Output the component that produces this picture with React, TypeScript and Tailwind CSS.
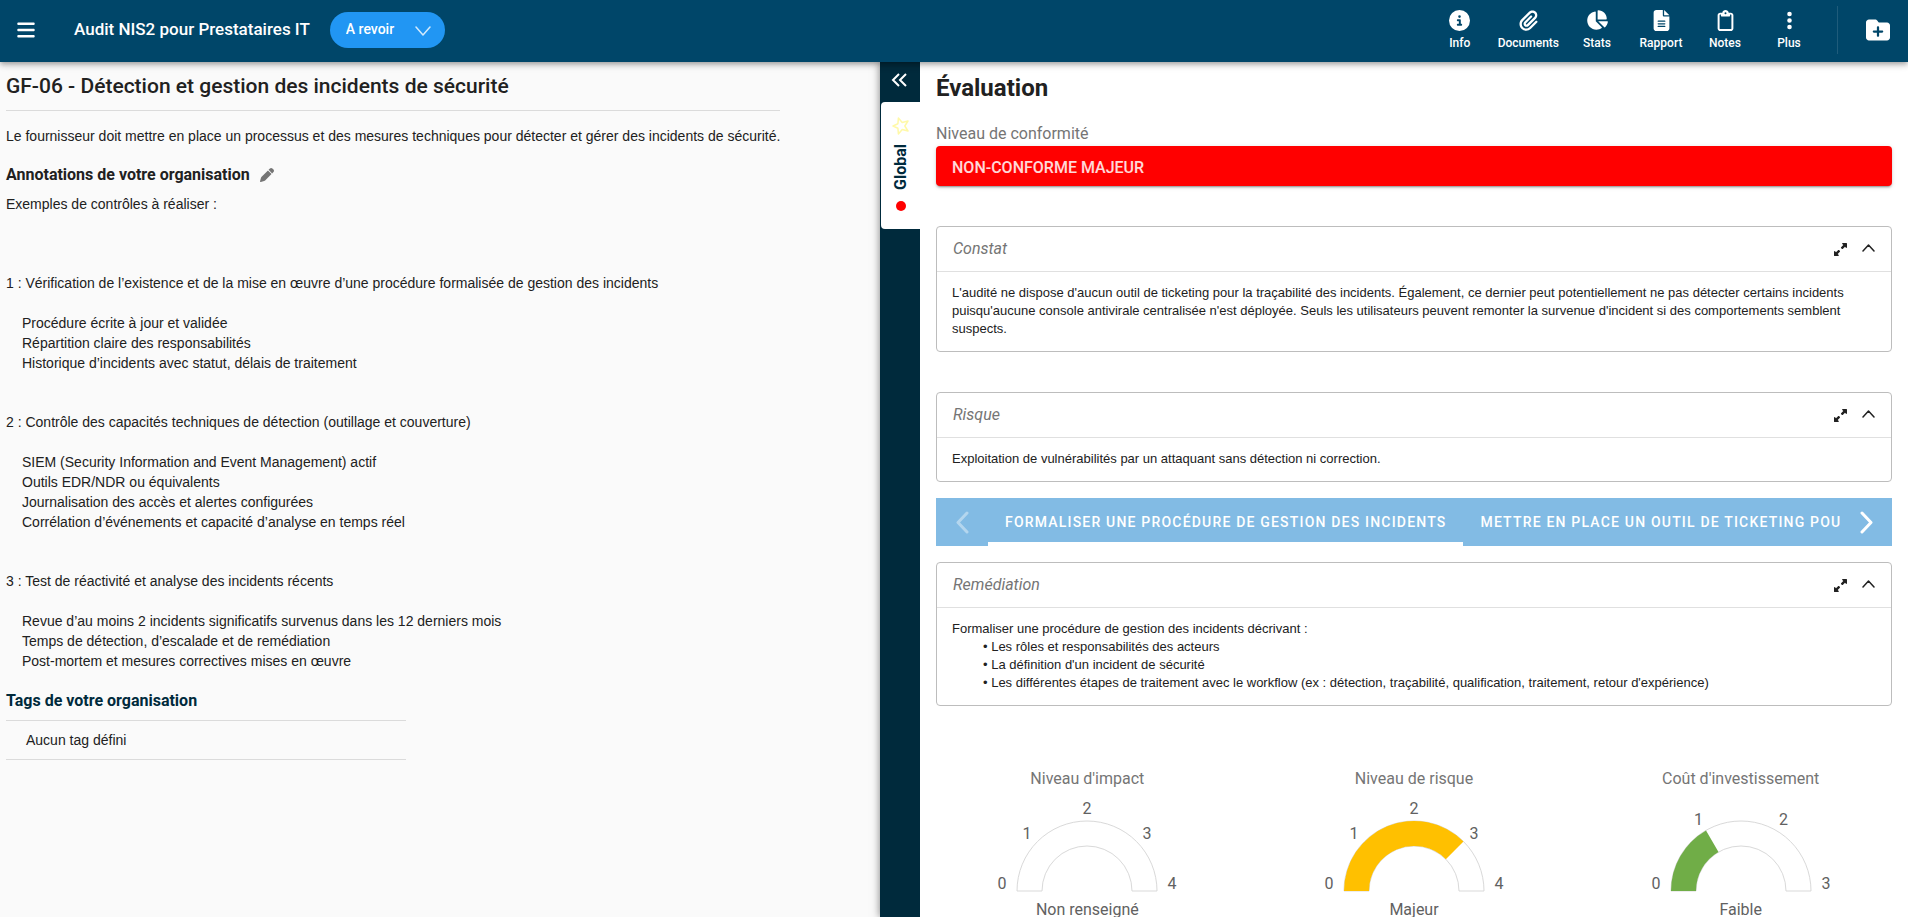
import { ReactNode, useState } from 'react';
import {
  FaBars,
  FaChartPie,
  FaCircleInfo,
  FaEllipsisVertical,
  FaFileLines,
  FaFolderPlus,
  FaPaperclip,
  FaPen,
  FaRegClipboard,
  FaUpRightAndDownLeftFromCenter,
} from 'react-icons/fa6';

const menuItems = [
  { label: 'Info', icon: <FaCircleInfo size={21} /> },
  { label: 'Documents', icon: <FaPaperclip size={21} /> },
  { label: 'Stats', icon: <FaChartPie size={22} /> },
  { label: 'Rapport', icon: <FaFileLines size={21} /> },
  { label: 'Notes', icon: <FaRegClipboard size={21} /> },
  { label: 'Plus', icon: <FaEllipsisVertical size={21} /> },
];

const controls = [
  {
    title:
      '1 : Vérification de l’existence et de la mise en œuvre d’une procédure formalisée de gestion des incidents',
    items: [
      'Procédure écrite à jour et validée',
      'Répartition claire des responsabilités',
      'Historique d’incidents avec statut, délais de traitement',
    ],
  },
  {
    title:
      '2 : Contrôle des capacités techniques de détection (outillage et couverture)',
    items: [
      'SIEM (Security Information and Event Management) actif',
      'Outils EDR/NDR ou équivalents',
      'Journalisation des accès et alertes configurées',
      'Corrélation d’événements et capacité d’analyse en temps réel',
    ],
  },
  {
    title: '3 : Test de réactivité et analyse des incidents récents',
    items: [
      'Revue d’au moins 2 incidents significatifs survenus dans les 12 derniers mois',
      'Temps de détection, d’escalade et de remédiation',
      'Post-mortem et mesures correctives mises en œuvre',
    ],
  },
];

const remediations = [
  'Formaliser une procédure de gestion des incidents',
  'Mettre en place un outil de ticketing pou',
];

interface ChevronProps {
  points: string;
  width: number;
  height: number;
  strokeWidth?: number;
  className?: string;
}

const Chevron = ({
  points,
  width,
  height,
  strokeWidth = 3,
  className,
}: ChevronProps) => (
  <svg
    width={width}
    height={height}
    viewBox={`0 0 ${width} ${height}`}
    fill="none"
    stroke="currentColor"
    strokeWidth={strokeWidth}
    strokeLinecap="round"
    strokeLinejoin="round"
    className={className}
    aria-hidden="true"
  >
    <polyline points={points} />
  </svg>
);

const Header = () => (
  <header className="relative z-10 flex h-[62px] shrink-0 items-center bg-[#004669] pb-0.5 text-white shadow-[0_2px_4px_-1px_rgba(0,0,0,0.2),0_4px_5px_0_rgba(0,0,0,0.14),0_1px_10px_0_rgba(0,0,0,0.12)]">
    <button type="button" aria-label="Menu" className="flex w-13 justify-center">
      <FaBars size={20} />
    </button>
    <h1 className="ml-[22px] text-[17px] font-medium whitespace-nowrap">
      Audit NIS2 pour Prestataires IT
    </h1>
    <div className="relative ml-5">
      <select
        aria-label="Statut"
        className="h-9 w-[115px] appearance-none rounded-full bg-[#2196f3] pb-0.5 pl-4 text-sm font-medium"
      >
        <option>A revoir</option>
      </select>
      <Chevron
        points="1,1 8,9 15,1"
        width={16}
        height={10}
        strokeWidth={1.5}
        className="pointer-events-none absolute top-3.5 right-3.5 opacity-80"
      />
    </div>
    <nav className="ml-auto flex">
      {menuItems.map(({ label, icon }) => (
        <button
          type="button"
          key={label}
          className="flex min-w-16 flex-col items-center gap-1 px-1.5 text-xs font-medium"
        >
          <span className="flex h-[22px] items-center">{icon}</span>
          {label}
        </button>
      ))}
    </nav>
    <span className="ml-4 h-12 w-px bg-white/12" />
    <button
      type="button"
      aria-label="Nouveau dossier"
      className="mr-3 ml-[22px] flex w-9 justify-center"
    >
      <FaFolderPlus size={24} />
    </button>
  </header>
);

const Requirement = () => (
  <main className="min-w-0 flex-1 bg-[#fafafa] px-1.5 pt-2 font-['Liberation_Sans',Arial,sans-serif] text-sm leading-5">
    <div className="w-fit">
      <h2 className="border-b border-black/12 pb-2 font-[Roboto,sans-serif] text-[21px] leading-8 font-medium">
        GF-06 - Détection et gestion des incidents de sécurité
      </h2>
      <p className="mt-[15px]">
        Le fournisseur doit mettre en place un processus et des mesures
        techniques pour détecter et gérer des incidents de sécurité.
      </p>
    </div>
    <h3 className="mt-[17px] flex h-6 items-center gap-2.5 font-[Roboto,sans-serif] text-base font-bold">
      Annotations de votre organisation
      <button type="button" aria-label="Modifier les annotations">
        <FaPen size={14} className="text-[#757575]" />
      </button>
    </h3>
    <p className="mt-[7px]">Exemples de contrôles à réaliser :</p>
    <div className="mt-[59px] flex flex-col gap-[39px]">
      {controls.map(({ title, items }) => (
        <section key={title}>
          <p>{title}</p>
          <ul className="mt-5 pl-4">
            {items.map((item) => (
              <li key={item}>{item}</li>
            ))}
          </ul>
        </section>
      ))}
    </div>
    <h3 className="mt-[18px] font-[Roboto,sans-serif] text-base leading-6 font-bold text-[#002a3c]">
      Tags de votre organisation
    </h3>
    <p className="mt-[7px] w-100 border-y border-black/12 px-5 py-[9px]">
      Aucun tag défini
    </p>
  </main>
);

const SideTabs = () => (
  <aside className="flex w-10 shrink-0 flex-col bg-[#002a3c] shadow-[0_0_8px_rgba(0,0,0,0.5)]">
    <button
      type="button"
      aria-label="Réduire"
      className="flex h-10 items-center justify-center pr-0.5 pb-1 text-white"
    >
      <svg
        width="16"
        height="14"
        viewBox="0 0 16 14"
        fill="none"
        stroke="currentColor"
        strokeWidth="2"
      >
        <path d="M8 1L2 7l6 6M15 1L9 7l6 6" />
      </svg>
    </button>
    <button
      type="button"
      className="ml-px flex h-[127px] flex-col items-center gap-[9px] rounded-l bg-white pt-[15px] text-[#002a3c]"
    >
      <svg
        width="18"
        height="18"
        viewBox="0 0 18 18"
        fill="none"
        stroke="#fff9a8"
        strokeWidth="1.5"
        strokeLinejoin="round"
      >
        <path d="M1 9l4.9-2.2.5-5.7 3.8 4.3L16 4l-3.2 5 3.2 5-5.8-1.4-3.8 4.3-.5-5.7z" />
      </svg>
      <span className="rotate-180 text-base leading-5 font-bold [writing-mode:vertical-rl]">
        Global
      </span>
      <span className="mt-0.5 size-2.5 rounded-full bg-[#ff0000]" />
    </button>
  </aside>
);

interface PanelProps {
  title: string;
  className?: string;
  children: ReactNode;
}

const Panel = ({ title, className, children }: PanelProps) => {
  const [isOpen, setIsOpen] = useState(true);

  return (
    <section className={`rounded border border-[#bdbdbd] ${className ?? ''}`}>
      <div className="flex h-11 items-center px-4">
        <h3 className="mr-auto text-base text-[#757575] italic">{title}</h3>
        <button type="button" aria-label="Agrandir">
          <FaUpRightAndDownLeftFromCenter size={13} />
        </button>
        <button
          type="button"
          aria-label="Replier"
          className="ml-[15px]"
          onClick={() => setIsOpen(!isOpen)}
        >
          <Chevron
            points="1,7 6.5,1 12,7"
            width={13}
            height={10}
            strokeWidth={1.5}
          />
        </button>
      </div>
      {isOpen && (
        <div className="border-t border-black/12 px-[15px] pt-3 pb-[13px] font-['Liberation_Sans',Arial,sans-serif] text-[13px] leading-[18px]">
          {children}
        </div>
      )}
    </section>
  );
};

const RemediationTabs = () => {
  const [active, setActive] = useState(0);

  return (
    <div className="mt-4 flex h-12 bg-[#82bbe4] text-white">
      <button
        type="button"
        aria-label="Précédent"
        className="flex w-13 shrink-0 items-center justify-center opacity-40"
      >
        <Chevron points="11,2 2,11.5 11,21" width={13} height={23} />
      </button>
      <div role="tablist" className="flex min-w-0 flex-1 overflow-hidden">
        {remediations.map((label, key) => (
          <button
            type="button"
            role="tab"
            key={label}
            aria-selected={key === active}
            onClick={() => setActive(key)}
            className={`shrink-0 border-b-4 px-[17px] pt-1 text-sm font-medium tracking-[0.085em] whitespace-nowrap uppercase ${
              key === active ? 'border-white' : 'border-transparent'
            }`}
          >
            {label}
          </button>
        ))}
      </div>
      <button
        type="button"
        aria-label="Suivant"
        className="flex w-13 shrink-0 items-center justify-center"
      >
        <Chevron points="2,2 11,11.5 2,21" width={13} height={23} />
      </button>
    </div>
  );
};

interface GaugeProps {
  title: string;
  caption: string;
  value: number;
  max: number;
  color: string;
}

const CENTER = { x: 100, y: 100 };

// Point on the half circle, where ratio 0 is the left end and 1 the right one
const pointAt = (ratio: number, radius: number) => {
  const angle = Math.PI * (1 - ratio);
  return {
    x: CENTER.x + radius * Math.cos(angle),
    y: CENTER.y - radius * Math.sin(angle),
  };
};

const arcPath = (ratio: number) => {
  const a = pointAt(0, 70);
  const b = pointAt(ratio, 70);
  const c = pointAt(ratio, 45);
  const d = pointAt(0, 45);
  return `M${a.x} ${a.y}A70 70 0 0 1 ${b.x} ${b.y}L${c.x} ${c.y}A45 45 0 0 0 ${d.x} ${d.y}Z`;
};

const Gauge = ({ title, caption, value, max, color }: GaugeProps) => (
  <div className="flex flex-col items-center text-base text-[#757575]">
    <h4>{title}</h4>
    <svg width="200" height="107" viewBox="0 0 200 107">
      <path d={arcPath(1)} fill="#fff" stroke="#d9d9d9" />
      {value > 0 && <path d={arcPath(value / max)} fill={color} />}
      {Array.from({ length: max + 1 }, (_, tick) => {
        const { x, y } = pointAt(tick / max, 85);
        return (
          <text
            key={tick}
            x={x}
            y={tick % max === 0 ? y - 2 : y + 8}
            textAnchor="middle"
            fill="#616161"
            fontSize="16"
          >
            {tick}
          </text>
        );
      })}
    </svg>
    <p className="text-[#616161]">{caption}</p>
  </div>
);

const Evaluation = () => (
  <section className="w-[988px] shrink-0 overflow-hidden bg-white px-4 pt-2.5">
    <h2 className="text-2xl font-bold">Évaluation</h2>
    <label
      htmlFor="conformity"
      className="mt-[18px] block text-base text-[#757575]"
    >
      Niveau de conformité
    </label>
    <select
      id="conformity"
      className="block h-10 w-full appearance-none rounded bg-[#ff0000] px-4 pt-[3px] text-base font-medium text-white/85 shadow-[0_3px_1px_-2px_rgba(0,0,0,0.2),0_2px_2px_0_rgba(0,0,0,0.14),0_1px_5px_0_rgba(0,0,0,0.12)]"
    >
      <option>NON-CONFORME MAJEUR</option>
    </select>
    <Panel title="Constat" className="mt-10">
      <p>
        L'audité ne dispose d'aucun outil de ticketing pour la traçabilité des
        incidents. Également, ce dernier peut potentiellement ne pas détecter
        certains incidents puisqu'aucune console antivirale centralisée n'est
        déployée. Seuls les utilisateurs peuvent remonter la survenue d'incident
        si des comportements semblent suspects.
      </p>
    </Panel>
    <Panel title="Risque" className="mt-10">
      <p>
        Exploitation de vulnérabilités par un attaquant sans détection ni
        correction.
      </p>
    </Panel>
    <RemediationTabs />
    <Panel title="Remédiation" className="mt-4">
      <p>Formaliser une procédure de gestion des incidents décrivant :</p>
      <ul className="pl-[31px]">
        <li>• Les rôles et responsabilités des acteurs</li>
        <li>• La définition d'un incident de sécurité</li>
        <li>
          • Les différentes étapes de traitement avec le workflow (ex :
          détection, traçabilité, qualification, traitement, retour
          d'expérience)
        </li>
      </ul>
    </Panel>
    <div className="-mx-3 mt-[61px] grid grid-cols-3">
      <Gauge
        title="Niveau d'impact"
        caption="Non renseigné"
        value={0}
        max={4}
        color="#ffffff"
      />
      <Gauge
        title="Niveau de risque"
        caption="Majeur"
        value={3}
        max={4}
        color="#ffc000"
      />
      <Gauge
        title="Coût d'investissement"
        caption="Faible"
        value={1}
        max={3}
        color="#70ad47"
      />
    </div>
  </section>
);

export default function App() {
  return (
    <div className="flex h-screen flex-col overflow-hidden font-[Roboto,sans-serif] text-[#212121]">
      <Header />
      <div className="flex min-h-0 flex-1">
        <Requirement />
        <SideTabs />
        <Evaluation />
      </div>
    </div>
  );
}
